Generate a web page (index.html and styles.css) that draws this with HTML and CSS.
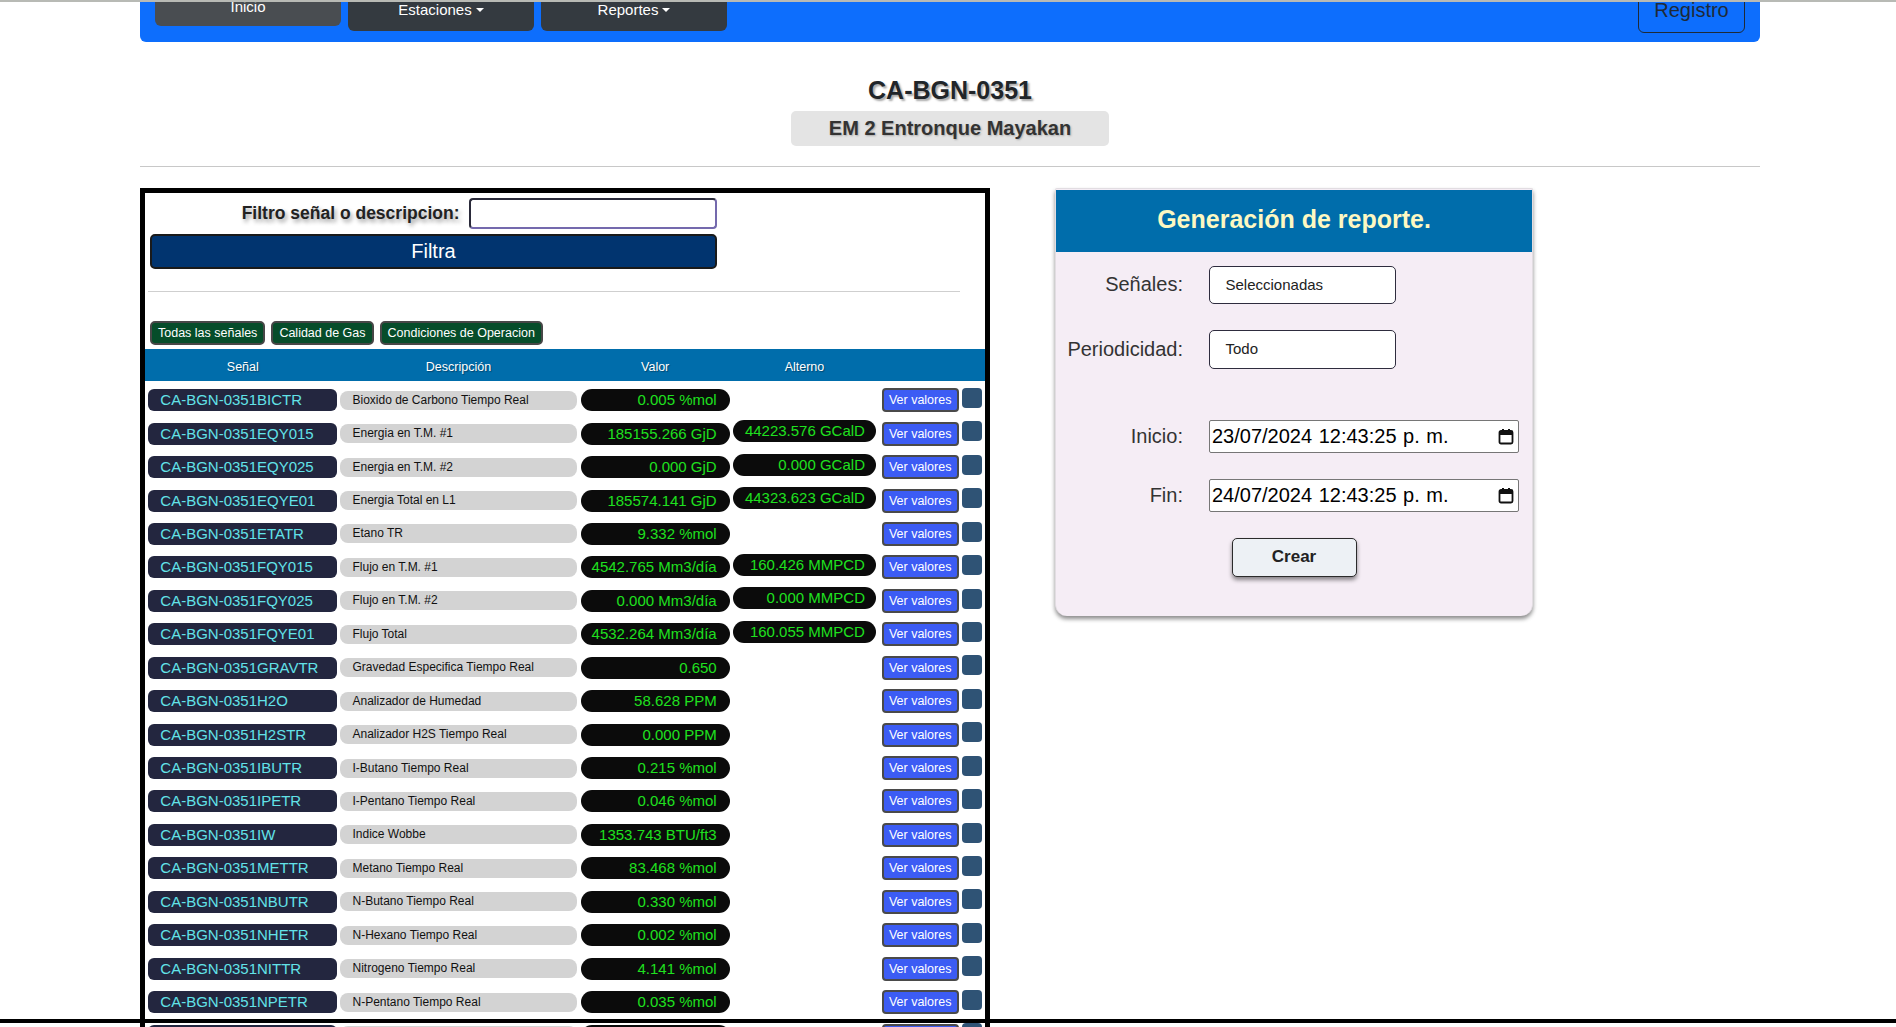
FILE: index.html
```html
<!DOCTYPE html>
<html lang="es">
<head>
<meta charset="utf-8">
<title>CA-BGN-0351</title>
<link rel="stylesheet" href="styles.css">
</head>
<body>
<div class="topline"></div>
<header class="navbar">
  <nav class="nav-left">
    <a class="nav-btn nav-btn-active">Inicio</a>
    <a class="nav-btn dropdown">Estaciones</a>
    <a class="nav-btn dropdown">Reportes</a>
  </nav>
  <a class="registro">Registro</a>
</header>

<main class="container">
  <div class="titles">
    <h1 class="station-code">CA-BGN-0351</h1>
    <div class="station-name">EM 2 Entronque Mayakan</div>
  </div>
  <hr class="sep">

  <div class="content">
    <section class="signals-panel">
      <div class="filter-form">
        <div class="filter-row">
          <label class="filter-label">Filtro señal o descripcion:</label>
          <div class="filter-input"></div>
        </div>
        <button class="filter-btn">Filtra</button>
      </div>
      <hr class="panel-sep">
      <div class="tabs">
        <button class="tab">Todas las señales</button>
        <button class="tab">Calidad de Gas</button>
        <button class="tab">Condiciones de Operacion</button>
      </div>

      <div class="thead">
        <span class="c-sig">Señal</span>
        <span class="c-desc">Descripción</span>
        <span class="c-val">Valor</span>
        <span class="c-alt">Alterno</span>
      </div>

      <div class="tbody">
        <div class="row"><span class="sig">CA-BGN-0351BICTR</span><span class="desc">Bioxido de Carbono Tiempo Real</span><span class="val">0.005 %mol</span><span class="alt empty"></span><button class="ver">Ver valores</button><span class="chk"></span></div>
        <div class="row"><span class="sig">CA-BGN-0351EQY015</span><span class="desc">Energia en T.M. #1</span><span class="val">185155.266 GjD</span><span class="alt">44223.576 GCalD</span><button class="ver">Ver valores</button><span class="chk"></span></div>
        <div class="row"><span class="sig">CA-BGN-0351EQY025</span><span class="desc">Energia en T.M. #2</span><span class="val">0.000 GjD</span><span class="alt">0.000 GCalD</span><button class="ver">Ver valores</button><span class="chk"></span></div>
        <div class="row"><span class="sig">CA-BGN-0351EQYE01</span><span class="desc">Energia Total en L1</span><span class="val">185574.141 GjD</span><span class="alt">44323.623 GCalD</span><button class="ver">Ver valores</button><span class="chk"></span></div>
        <div class="row"><span class="sig">CA-BGN-0351ETATR</span><span class="desc">Etano TR</span><span class="val">9.332 %mol</span><span class="alt empty"></span><button class="ver">Ver valores</button><span class="chk"></span></div>
        <div class="row"><span class="sig">CA-BGN-0351FQY015</span><span class="desc">Flujo en T.M. #1</span><span class="val">4542.765 Mm3/día</span><span class="alt">160.426 MMPCD</span><button class="ver">Ver valores</button><span class="chk"></span></div>
        <div class="row"><span class="sig">CA-BGN-0351FQY025</span><span class="desc">Flujo en T.M. #2</span><span class="val">0.000 Mm3/día</span><span class="alt">0.000 MMPCD</span><button class="ver">Ver valores</button><span class="chk"></span></div>
        <div class="row"><span class="sig">CA-BGN-0351FQYE01</span><span class="desc">Flujo Total</span><span class="val">4532.264 Mm3/día</span><span class="alt">160.055 MMPCD</span><button class="ver">Ver valores</button><span class="chk"></span></div>
        <div class="row"><span class="sig">CA-BGN-0351GRAVTR</span><span class="desc">Gravedad Especifica Tiempo Real</span><span class="val">0.650</span><span class="alt empty"></span><button class="ver">Ver valores</button><span class="chk"></span></div>
        <div class="row"><span class="sig">CA-BGN-0351H2O</span><span class="desc">Analizador de Humedad</span><span class="val">58.628 PPM</span><span class="alt empty"></span><button class="ver">Ver valores</button><span class="chk"></span></div>
        <div class="row"><span class="sig">CA-BGN-0351H2STR</span><span class="desc">Analizador H2S Tiempo Real</span><span class="val">0.000 PPM</span><span class="alt empty"></span><button class="ver">Ver valores</button><span class="chk"></span></div>
        <div class="row"><span class="sig">CA-BGN-0351IBUTR</span><span class="desc">I-Butano Tiempo Real</span><span class="val">0.215 %mol</span><span class="alt empty"></span><button class="ver">Ver valores</button><span class="chk"></span></div>
        <div class="row"><span class="sig">CA-BGN-0351IPETR</span><span class="desc">I-Pentano Tiempo Real</span><span class="val">0.046 %mol</span><span class="alt empty"></span><button class="ver">Ver valores</button><span class="chk"></span></div>
        <div class="row"><span class="sig">CA-BGN-0351IW</span><span class="desc">Indice Wobbe</span><span class="val">1353.743 BTU/ft3</span><span class="alt empty"></span><button class="ver">Ver valores</button><span class="chk"></span></div>
        <div class="row"><span class="sig">CA-BGN-0351METTR</span><span class="desc">Metano Tiempo Real</span><span class="val">83.468 %mol</span><span class="alt empty"></span><button class="ver">Ver valores</button><span class="chk"></span></div>
        <div class="row"><span class="sig">CA-BGN-0351NBUTR</span><span class="desc">N-Butano Tiempo Real</span><span class="val">0.330 %mol</span><span class="alt empty"></span><button class="ver">Ver valores</button><span class="chk"></span></div>
        <div class="row"><span class="sig">CA-BGN-0351NHETR</span><span class="desc">N-Hexano Tiempo Real</span><span class="val">0.002 %mol</span><span class="alt empty"></span><button class="ver">Ver valores</button><span class="chk"></span></div>
        <div class="row"><span class="sig">CA-BGN-0351NITTR</span><span class="desc">Nitrogeno Tiempo Real</span><span class="val">4.141 %mol</span><span class="alt empty"></span><button class="ver">Ver valores</button><span class="chk"></span></div>
        <div class="row"><span class="sig">CA-BGN-0351NPETR</span><span class="desc">N-Pentano Tiempo Real</span><span class="val">0.035 %mol</span><span class="alt empty"></span><button class="ver">Ver valores</button><span class="chk"></span></div>
        <div class="row"><span class="sig">CA-BGN-0351PROPTR</span><span class="desc">Propano Tiempo Real</span><span class="val">5.108 %mol</span><span class="alt empty"></span><button class="ver">Ver valores</button><span class="chk"></span></div>
        <div class="row"><span class="sig">CA-BGN-0351PRESTR</span><span class="desc">Presion</span><span class="val">52.310 kg/cm2</span><span class="alt empty"></span><button class="ver">Ver valores</button><span class="chk"></span></div>
      </div>
    </section>

    <section class="report-card">
      <h2 class="card-title">Generación de reporte.</h2>
      <div class="card-body">
        <div class="form-row">
          <span class="form-label">Señales:</span>
          <div class="select-box">Seleccionadas</div>
        </div>
        <div class="form-row row-periodo">
          <span class="form-label">Periodicidad:</span>
          <div class="select-box">Todo</div>
        </div>
        <div class="form-row row-inicio">
          <span class="form-label">Inicio:</span>
          <div class="date-box"><span>23/07/2024 12:43:25 p. m.</span>
            <svg class="cal" width="16" height="17" viewBox="0 0 16 17"><rect x="1.5" y="3" width="13" height="12.5" rx="1.5" fill="none" stroke="#111" stroke-width="1.8"/><rect x="1.5" y="3" width="13" height="4" fill="#111"/><rect x="4" y="1" width="2" height="3" fill="#111"/><rect x="10" y="1" width="2" height="3" fill="#111"/></svg>
          </div>
        </div>
        <div class="form-row row-fin">
          <span class="form-label">Fin:</span>
          <div class="date-box"><span>24/07/2024 12:43:25 p. m.</span>
            <svg class="cal" width="16" height="17" viewBox="0 0 16 17"><rect x="1.5" y="3" width="13" height="12.5" rx="1.5" fill="none" stroke="#111" stroke-width="1.8"/><rect x="1.5" y="3" width="13" height="4" fill="#111"/><rect x="4" y="1" width="2" height="3" fill="#111"/><rect x="10" y="1" width="2" height="3" fill="#111"/></svg>
          </div>
        </div>
        <button class="crear">Crear</button>
      </div>
    </section>
  </div>
</main>
<div class="bottom-bar"></div>
</body>
</html>
```

FILE: styles.css
```css
html { scrollbar-width: none; }
html::-webkit-scrollbar { display: none; }
* { box-sizing: border-box; }
body {
  margin: 0;
  background: #fff;
  font-family: "Liberation Sans", Arial, sans-serif;
  color: #212529;
}
button { font-family: inherit; cursor: pointer; }

.topline { height: 2px; background: #b8bab5; }

.navbar {
  margin-left: 140px;
  width: 1620px;
  height: 40px;
  background: #0d6efd;
  border-radius: 0 0 6px 6px;
  display: flex;
  justify-content: space-between;
  align-items: flex-start;
  overflow: hidden;
}
.nav-left { display: flex; gap: 7px; padding-left: 15px; }
.nav-btn {
  width: 186px;
  height: 28.5px;
  background: #343a40;
  color: #fff;
  font-size: 15px;
  line-height: 15px;
  text-align: center;
  border-radius: 0 0 6px 6px;
}
.nav-btn-active { background: #494d51; margin-top: -5px; padding-top: 2px; }
.dropdown::after {
  content: "";
  display: inline-block;
  margin-left: 4px;
  vertical-align: 3px;
  border-top: 4.5px solid #fff;
  border-left: 4px solid transparent;
  border-right: 4px solid transparent;
}
.registro {
  margin-right: 15px;
  margin-top: -6px;
  width: 107px;
  height: 36.5px;
  border: 1px solid #1f2a36;
  border-radius: 6px;
  padding-top: 3px;
  color: #1f2a36;
  font-size: 20px;
  line-height: 20px;
  text-align: center;
}

.container { margin-left: 140px; width: 1620px; }

.titles {
  padding-top: 34px;
  display: flex;
  flex-direction: column;
  align-items: center;
}
.station-code {
  margin: 0;
  font-size: 25px;
  line-height: 29px;
  font-weight: bold;
  color: #212529;
  text-shadow: 2px 2px 2px #a9a9a9;
}
.station-name {
  margin-top: 6px;
  height: 35px;
  padding: 0 38px;
  background: #e4e4e4;
  border-radius: 5px;
  font-size: 20px;
  line-height: 35px;
  font-weight: bold;
  color: #333;
  text-shadow: 1px 1px 2px #aaa;
}
.sep {
  margin: 20px 0 0 0;
  border: 0;
  border-top: 1px solid #c8c8c8;
}

.content { display: flex; align-items: flex-start; margin-top: 21px; }

.signals-panel {
  width: 850px;
  border: 5px solid #000;
  border-bottom: 0;
  padding-top: 4.5px;
}
.filter-form { width: 567px; margin-left: 5px; }
.filter-row { display: flex; justify-content: flex-end; align-items: center; gap: 9.5px; }
.filter-label {
  font-size: 17.5px;
  font-weight: bold;
  color: #222;
  text-shadow: 2px 3px 4px #999;
}
.filter-input {
  width: 248px;
  height: 31.5px;
  border: 2px solid #7469ad;
  border-top-color: #2a2a3a;
  border-left-color: #2a2a3a;
  border-radius: 4px;
  background: #fff;
}
.filter-btn {
  display: block;
  width: 100%;
  height: 35.5px;
  margin-top: 4.5px;
  background: #01346f;
  border: 2px solid #1a1a1a;
  border-radius: 5px;
  color: #fff;
  font-size: 20px;
}
.panel-sep {
  margin: 21.5px 25px 0 2.5px;
  border: 0;
  border-top: 1px solid #cfcfcf;
}
.tabs { display: flex; gap: 6px; margin-top: 29.5px; padding-left: 5px; }
.tab {
  height: 24px;
  padding: 0 6px;
  background: #064d2a;
  border: 2px solid #474747;
  border-radius: 5px;
  color: #fff;
  font-size: 12.5px;
}

.thead, .row { display: flex; align-items: center; padding-left: 3.3px; }
.thead {
  margin-top: 3.5px;
  height: 32.5px;
  padding-top: 4px;
  background: #006dab;
  color: #fff;
  font-size: 12.5px;
  text-shadow: 1px 1px 1px rgba(0,0,0,0.35);
}
.thead span { text-align: center; }
.c-sig { width: 189px; margin-right: 2.7px; }
.c-desc { width: 237px; margin-right: 3.7px; }
.c-val { width: 149px; margin-right: 3.3px; }
.c-alt { width: 143px; }

.tbody { padding-top: 2.5px; }
.row { height: 33.44px; }
.sig {
  width: 189px;
  height: 22px;
  margin-right: 2.7px;
  padding-left: 12px;
  background: #23263f;
  border-radius: 6px;
  color: #62e2e8;
  font-size: 15px;
  line-height: 22px;
  white-space: nowrap;
}
.desc {
  width: 237px;
  height: 19px;
  margin-right: 3.7px;
  padding-left: 12.5px;
  background: #d3d3d3;
  border-radius: 8px;
  color: #111;
  font-size: 12px;
  line-height: 19px;
  white-space: nowrap;
}
.val, .alt {
  height: 22px;
  background: #0b0b0b;
  border-radius: 11px;
  color: #1fe01f;
  font-size: 15px;
  line-height: 22px;
  text-align: right;
  white-space: nowrap;
}
.val { width: 149px; margin-right: 3.3px; padding-right: 13px; }
.alt { width: 143px; margin-right: 5.7px; padding-right: 11px; margin-bottom: 5px; }
.alt.empty { background: transparent; }
.ver {
  width: 77px;
  height: 24px;
  margin-right: 3.3px;
  padding: 0;
  background: #3c5cf4;
  border: 2px solid #4a4a4a;
  border-radius: 4px;
  color: #fff;
  font-size: 12.5px;
}
.chk {
  width: 20px;
  height: 20px;
  margin-bottom: 4.6px;
  background: #2f5375;
  border-radius: 4px;
}

.report-card {
  margin-left: 65px;
  margin-top: -0.5px;
  width: 478px;
  background: #f5edf5;
  border: 1px solid #e2dde2;
  border-bottom: 0;
  border-radius: 2px 2px 12px 12px;
  box-shadow: 0 3px 4px rgba(0,0,0,0.45);
}
.card-title {
  margin: 1px 0 0 0;
  height: 62px;
  padding-bottom: 4px;
  background: #006dab;
  color: #fdf8c2;
  font-size: 25px;
  line-height: 58px;
  font-weight: bold;
  text-align: center;
}
.card-body { display: flex; flex-direction: column; padding: 14px 0 39.5px 0; }
.form-row { display: grid; grid-template-columns: 127px auto; column-gap: 26px; align-items: center; }
.row-periodo { margin-top: 26px; }
.row-inicio { margin-top: 51px; }
.row-fin { margin-top: 26px; }
.form-label { text-align: right; font-size: 20px; color: #333; }
.select-box {
  width: 187px;
  height: 38.5px;
  background: #fff;
  border: 1px solid #2e2c3e;
  border-radius: 5px;
  padding-left: 15.5px;
  font-size: 15px;
  line-height: 36.5px;
  color: #222;
}
.date-box {
  width: 310px;
  height: 33px;
  background: #fff;
  border: 1px solid #767676;
  border-radius: 2px;
  padding: 0 4px 0 2px;
  display: flex;
  justify-content: space-between;
  align-items: center;
  font-size: 20px;
  color: #000;
  word-spacing: 1px;
}
.cal { display: block; }
.crear {
  align-self: center;
  margin-top: 26px;
  width: 125px;
  height: 39px;
  background: #edf1f5;
  border: 1px solid #2b2b2b;
  border-radius: 5px;
  box-shadow: 0 3px 4px rgba(0,0,0,0.45);
  font-size: 17px;
  font-weight: bold;
  color: #222;
}

.bottom-bar {
  position: fixed;
  left: 0;
  right: 0;
  bottom: 4px;
  height: 4px;
  background: #000;
}
```
